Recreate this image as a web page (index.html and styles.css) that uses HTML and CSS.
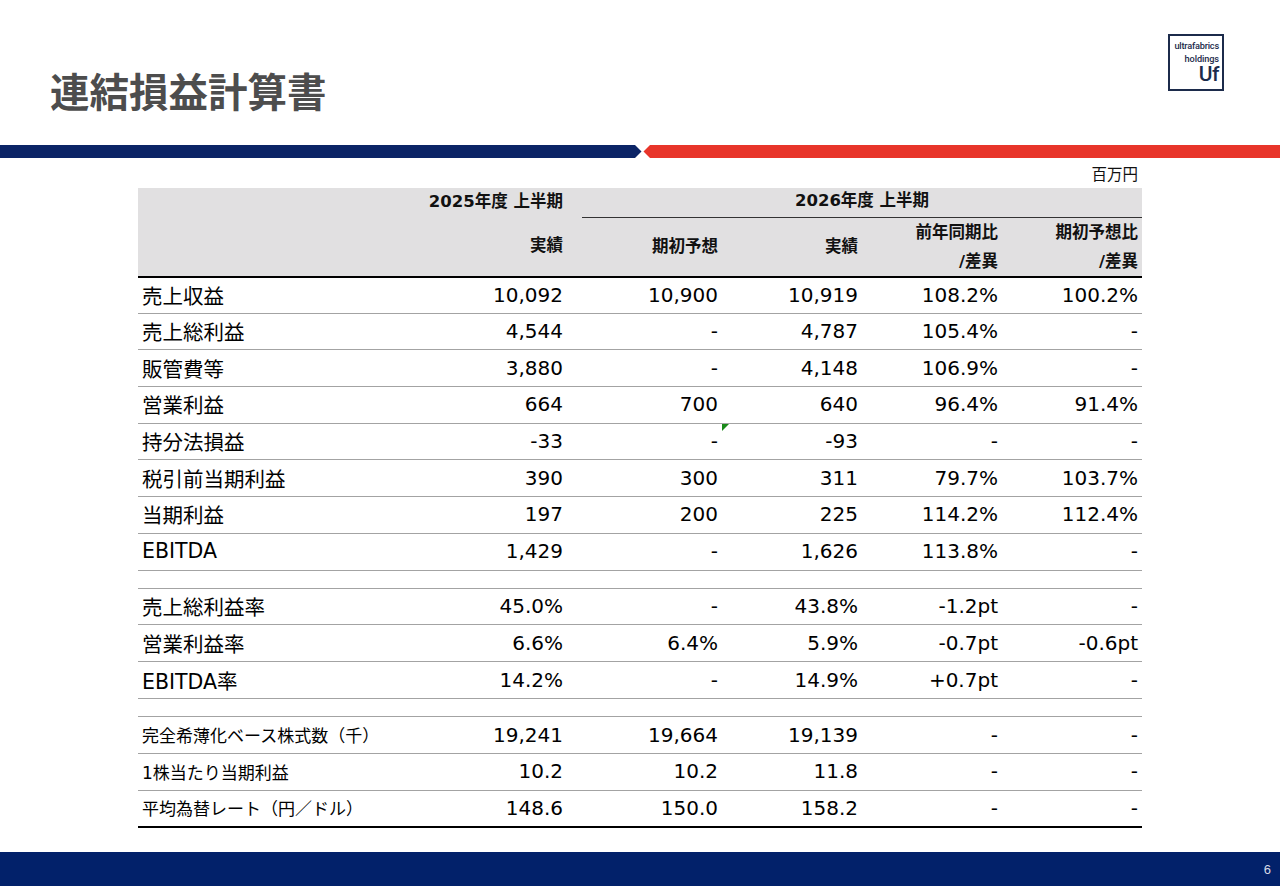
FILE: index.html
```html
<!DOCTYPE html>
<html lang="ja">
<head>
<meta charset="utf-8">
<title>連結損益計算書</title>
<link rel="stylesheet" href="styles.css">
</head>
<body>
<div class="page">
  <header class="top">
    <h1 class="title">連結損益計算書</h1>
    <div class="logo">
      <span class="logo-l1">ultrafabrics</span>
      <span class="logo-l2">holdings</span>
      <span class="logo-l3">Uf</span>
    </div>
  </header>
  <svg class="stripe" width="1280" height="13" viewBox="0 0 1280 13" aria-hidden="true">
    <polygon points="0,0 635,0 641.5,6.5 635,13 0,13" fill="#0b2466"/>
    <polygon points="650,0 1280,0 1280,13 650,13 643.5,6.5" fill="#e8352a"/>
  </svg>
  <div class="unit">百万円</div>
  <table class="pl">
    <colgroup>
      <col class="c-label"><col class="c-prev"><col class="c-n"><col class="c-n"><col class="c-n"><col class="c-n">
    </colgroup>
    <thead>
      <tr class="h1">
        <th></th>
        <th class="r prev">2025年度 上半期</th>
        <th class="grp" colspan="4">2026年度 上半期</th>
      </tr>
      <tr class="h2">
        <th></th>
        <th class="r prev">実績</th>
        <th class="r">期初予想</th>
        <th class="r">実績</th>
        <th class="r two">前年同期比<br>/差異</th>
        <th class="r two">期初予想比<br>/差異</th>
      </tr>
    </thead>
    <tbody>
      <tr><td class="lbl">売上収益</td><td class="prev">10,092</td><td>10,900</td><td>10,919</td><td>108.2%</td><td>100.2%</td></tr>
      <tr><td class="lbl">売上総利益</td><td class="prev">4,544</td><td>-</td><td>4,787</td><td>105.4%</td><td>-</td></tr>
      <tr><td class="lbl">販管費等</td><td class="prev">3,880</td><td>-</td><td>4,148</td><td>106.9%</td><td>-</td></tr>
      <tr><td class="lbl">営業利益</td><td class="prev">664</td><td>700</td><td>640</td><td>96.4%</td><td>91.4%</td></tr>
      <tr><td class="lbl">持分法損益</td><td class="prev">-33</td><td>-</td><td class="mark-cell"><span class="mark"></span>-93</td><td>-</td><td>-</td></tr>
      <tr><td class="lbl">税引前当期利益</td><td class="prev">390</td><td>300</td><td>311</td><td>79.7%</td><td>103.7%</td></tr>
      <tr><td class="lbl">当期利益</td><td class="prev">197</td><td>200</td><td>225</td><td>114.2%</td><td>112.4%</td></tr>
      <tr><td class="lbl">EBITDA</td><td class="prev">1,429</td><td>-</td><td>1,626</td><td>113.8%</td><td>-</td></tr>
      <tr class="gap"><td colspan="6"></td></tr>
      <tr><td class="lbl">売上総利益率</td><td class="prev">45.0%</td><td>-</td><td>43.8%</td><td>-1.2pt</td><td>-</td></tr>
      <tr><td class="lbl">営業利益率</td><td class="prev">6.6%</td><td>6.4%</td><td>5.9%</td><td>-0.7pt</td><td>-0.6pt</td></tr>
      <tr><td class="lbl">EBITDA率</td><td class="prev">14.2%</td><td>-</td><td>14.9%</td><td>+0.7pt</td><td>-</td></tr>
      <tr class="gap"><td colspan="6"></td></tr>
      <tr><td class="lbl sm">完全希薄化ベース株式数（千）</td><td class="prev">19,241</td><td>19,664</td><td>19,139</td><td>-</td><td>-</td></tr>
      <tr><td class="lbl sm">1株当たり当期利益</td><td class="prev">10.2</td><td>10.2</td><td>11.8</td><td>-</td><td>-</td></tr>
      <tr class="last"><td class="lbl sm">平均為替レート（円／ドル）</td><td class="prev">148.6</td><td>150.0</td><td>158.2</td><td>-</td><td>-</td></tr>
    </tbody>
  </table>
  <footer class="foot"><span class="pageno">6</span></footer>
</div>
</body>
</html>
```

FILE: styles.css
```css
* { box-sizing: border-box; }
html, body { margin: 0; padding: 0; background: #fff; }
body { font-family: "DejaVu Sans", "Noto Sans CJK JP", sans-serif; color: #000; }

.page {
  width: 1280px;
  height: 886px;
  display: flex;
  flex-direction: column;
  overflow: hidden;
}

.top {
  height: 145px;
  display: flex;
  justify-content: space-between;
  align-items: flex-start;
}
.title {
  margin: 70px 0 0 50px;
  font-family: "Noto Sans CJK JP", sans-serif;
  font-weight: 700;
  font-size: 39.5px;
  line-height: 1;
  color: #4d4d4d;
}
.logo {
  margin: 34px 56px 0 0;
  width: 56px;
  height: 57px;
  border: 2px solid #1c2b4b;
  display: flex;
  flex-direction: column;
  align-items: flex-end;
  padding: 5px 3px 0 0;
  font-family: "Roboto", "Liberation Sans", sans-serif;
  font-weight: 500;
  color: #1c2b4b;
  line-height: 1;
}
.logo-l1 { font-size: 9.2px; letter-spacing: -0.2px; }
.logo-l2 { font-size: 9.2px; letter-spacing: -0.1px; margin-top: 4px; }
.logo-l3 { font-size: 21px; margin-top: 1px; letter-spacing: -0.5px; }

.stripe { display: block; flex: none; }

.unit {
  margin-top: 6px;
  height: 18px;
  line-height: 18px;
  font-family: "Noto Sans CJK JP", sans-serif;
  font-size: 15.5px;
  text-align: right;
  padding-right: 142px;
  color: #111;
}

.pl {
  margin: 6px 0 0 138px;
  width: 1004px;
  border-collapse: collapse;
  table-layout: fixed;
}
.c-label { width: 284px; }
.c-prev { width: 160px; }
.c-n { width: 140px; }

.pl th {
  background: #e1e0e1;
  font-family: "DejaVu Sans", "Noto Sans CJK JP", sans-serif;
  font-weight: 700;
  font-size: 16.5px;
  line-height: 20px;
  padding: 0 4px;
  color: #111;
  vertical-align: middle;
}
.pl th.r { text-align: right; }
.pl th.prev, .pl td.prev { padding-right: 19px; }
.pl .h1 th { height: 29px; padding-bottom: 2px; }
.pl .h1 th.grp { text-align: center; border-bottom: 1px solid #333; }
.pl .h2 th { height: 54px; border-bottom: 2px solid #000; }
.pl .h2 th.two { line-height: 29px; padding-top: 0; padding-bottom: 0; }

.pl td {
  height: 36.7px;
  padding: 0 4px 1px;
  text-align: right;
  font-size: 20px;
  border-bottom: 1.5px solid #a3a3a3;
  vertical-align: middle;
  white-space: nowrap;
}
.pl td.lbl {
  text-align: left;
  font-size: 20.5px;
  padding-left: 4px;
}
.pl td.lbl.sm { font-size: 17px; }
.pl tr.gap td { height: 18.3px; padding: 0; }
.pl tr.last td { border-bottom: 2px solid #000; }

.mark-cell { position: relative; }
.mark {
  position: absolute;
  left: 0;
  top: 0;
  width: 0;
  height: 0;
  border-top: 7px solid #1a8a1a;
  border-right: 7px solid transparent;
}

.foot {
  margin-top: auto;
  height: 34px;
  background: #02216a;
  display: flex;
  justify-content: flex-end;
  align-items: center;
  padding-right: 9px;
}
.pageno {
  font-family: "Liberation Sans", sans-serif;
  font-size: 13px;
  color: #d8dbe6;
}
```
